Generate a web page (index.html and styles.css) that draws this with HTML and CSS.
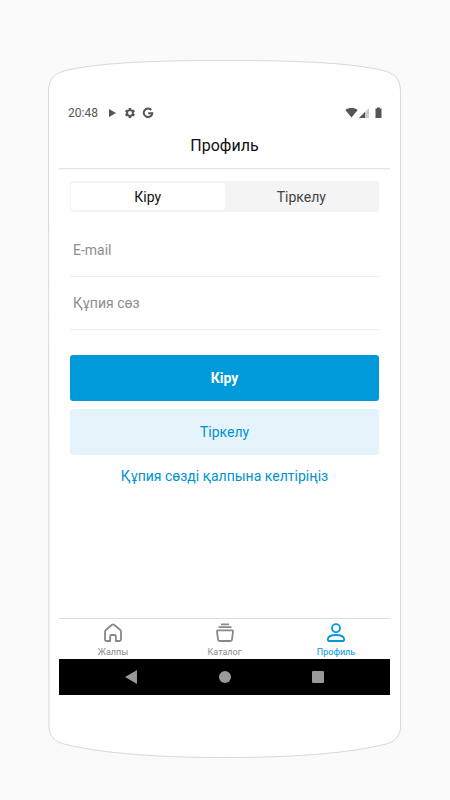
FILE: index.html
```html
<!DOCTYPE html>
<html lang="kk">
<head>
    <meta charset="UTF-8">
    <meta name="viewport" content="width=device-width, initial-scale=1.0">
    <title>Профиль</title>
    <link rel="stylesheet" href="styles.css">
</head>
<body>
    <div class="phone">
        <svg class="phone-frame" viewBox="0 0 353 698" preserveAspectRatio="none" aria-hidden="true">
            <path d="M.5 32C.5 18 7 13 20 10C60 1 130 .5 177 .5S293 1 333 10C346 13 352.500 18 352.500 32V667C352.500 676 346 682 338 684C290 696 220 697.500 177 697.500S64 696 16 684C7 682 1 676 1 667Z" vector-effect="non-scaling-stroke"/>
        </svg>

        <div class="screen">
            <div class="status-bar">
                <span class="time">20:48</span>
                <svg class="status-icon" viewBox="0 0 12 12"><path d="M3 2l7 4-7 4z"/></svg>
                <svg class="status-icon gear" viewBox="0 0 24 24"><path d="M19.400 13a7.500 7.500 0 0 0 0-2l2.100-1.600a.5.5 0 0 0 .1-.7l-2-3.400a.5.5 0 0 0-.6-.2l-2.500 1a7.300 7.300 0 0 0-1.700-1L14.500 2.400a.5.500 0 0 0-.5-.4h-4a.5.5 0 0 0-.5.400l-.4 2.700a7.300 7.300 0 0 0-1.700 1l-2.500-1a.5.5 0 0 0-.6.200l-2 3.400a.5.5 0 0 0 .1.700L4.500 11a7.500 7.500 0 0 0 0 2l-2.100 1.600a.5.5 0 0 0-.1.700l2 3.400a.5.5 0 0 0 .6.200l2.500-1a7.300 7.300 0 0 0 1.700 1l.4 2.700a.5.500 0 0 0 .5.400h4a.5.5 0 0 0 .5-.4l.4-2.700a7.300 7.300 0 0 0 1.700-1l2.500 1a.5.5 0 0 0 .6-.2l2-3.400a.5.5 0 0 0-.1-.7zM12 15.800a3.800 3.800 0 1 1 0-7.600 3.800 3.800 0 0 1 0 7.600z"/></svg>
                <svg class="status-icon" viewBox="0 0 12 12"><path class="ring" d="M9.300 3A4.300 4.300 0 1 0 10.300 6.300H6.200"/></svg>
                <div class="signals">
                    <svg class="wifi" viewBox="0 0 13 12"><path d="M6.500 10.500L.3 3C3.500.4 9.500.4 12.700 3z"/></svg>
                    <svg class="cell" viewBox="0 0 10 12"><path class="weak" d="M10 1v10H0z"/><path d="M6 5v6H0z"/></svg>
                    <svg class="battery" viewBox="0 0 7 12"><path d="M2 .5h3v1h1.500V11H.5V1.500H2z"/></svg>
                </div>
            </div>

            <header class="header">
                <h1>Профиль</h1>
            </header>

            <main class="content">
                <div class="tabs" role="tablist">
                    <button class="tab active" type="button" role="tab" aria-selected="true">Кіру</button>
                    <button class="tab" type="button" role="tab" aria-selected="false">Тіркелу</button>
                </div>

                <form class="login-form">
                    <input class="field" type="email" placeholder="E-mail" aria-label="E-mail">
                    <input class="field" type="password" placeholder="Құпия сөз" aria-label="Құпия сөз">
                    <button class="btn primary" type="submit">Кіру</button>
                    <button class="btn secondary" type="button">Тіркелу</button>
                </form>
                <a class="reset-link" href="#reset">Құпия сөзді қалпына келтіріңіз</a>
            </main>

            <nav class="bottom-nav">
                <a class="nav-item" href="#home">
                    <svg viewBox="0 0 20 20"><path d="M2 8.500C2 7.700 2.300 7.200 3 6.700L9 1.700Q10 1 11 1.700L17 6.700C17.700 7.200 18 7.700 18 8.500V16.500Q18 18 16.500 18H12.800V13Q12.800 12 11.800 12H8.200Q7.200 12 7.200 13V18H3.500Q2 18 2 16.500Z"/></svg>
                    Жалпы
                </a>
                <a class="nav-item" href="#catalog">
                    <svg viewBox="0 0 20 20"><path d="M6 1.300h8M3.500 4.200h13M3 7.300h14Q18.200 7.300 18 8.500L17 16.500Q16.800 18 15.300 18H4.700Q3.200 18 3 16.500L2 8.500Q1.800 7.300 3 7.300Z"/></svg>
                    Каталог
                </a>
                <a class="nav-item active" href="#profile">
                    <svg viewBox="0 0 20 20"><circle cx="10" cy="5.200" r="4"/><path d="M3 18Q1.700 18 1.700 16.500C2 13.500 5 12 10 12S18 13.500 18.300 16.500Q18.300 18 17 18Z"/></svg>
                    Профиль
                </a>
            </nav>

            <div class="system-nav">
                <button type="button" aria-label="Артқа"><svg viewBox="0 0 14 14"><path d="M13 0v14L1 7z"/></svg></button>
                <button type="button" aria-label="Басты экран"><svg viewBox="0 0 14 14"><circle cx="7" cy="7" r="6"/></svg></button>
                <button type="button" aria-label="Соңғылар"><svg viewBox="0 0 14 14"><rect x="1" y="1" width="12" height="12" rx="1"/></svg></button>
            </div>
        </div>
    </div>
</body>
</html>
```

FILE: styles.css
```css
* {
    margin: 0;
    padding: 0;
    box-sizing: border-box;
    font-family: Roboto, "Noto Sans", sans-serif;
}

body {
    background: #fafafa;
    min-height: 100vh;
    padding: 60px 49px 42px 48px;
    display: flex;
}

.phone {
    flex: 1;
    display: grid;
}

/* the curved outline shares one grid cell with the screen */
.phone-frame,
.screen {
    grid-area: 1 / 1;
    min-width: 0;
}

.phone-frame {
    width: 100%;
    height: 100%;
    min-height: 0;
    contain: size;
}

.phone-frame path {
    fill: #fff;
    stroke: #d8d8d8;
    stroke-width: 1px;
}

.screen {
    z-index: 1;
    display: flex;
    flex-direction: column;
    margin: 41px 11px 63px;
}

.status-bar {
    display: flex;
    align-items: center;
    height: 24px;
    padding: 0 8px 0 9px;
    color: #555;
}

.time {
    font-size: 12px;
    margin-right: 8px;
}

.status-bar svg {
    height: 12px;
    fill: #555;
}

.status-icon {
    width: 12px;
    margin-right: 6px;
}

.status-bar .ring {
    fill: none;
    stroke: #555;
    stroke-width: 2;
}

.signals {
    display: flex;
    margin-left: auto;
}

.wifi {
    width: 13px;
    margin-right: 1px;
}

.cell {
    width: 10px;
    margin-right: 6px;
}

.battery {
    width: 7px;
}

.status-bar .weak {
    fill: #ccc;
}

.header {
    height: 44px;
    padding-top: 10px;
    text-align: center;
    border-bottom: 1px solid #e4e4e4;
    box-shadow: 0 1px 1px #f5f5f5;
}

.header h1 {
    font-size: 16px;
    line-height: 22px;
    font-weight: 400;
    color: #111;
}

.content {
    flex: 1;
    padding: 12px 11px;
}

.tabs {
    display: flex;
    padding: 2px 1px;
    background: #f4f4f4;
    border-radius: 3px;
    margin-bottom: 12px;
}

.tab {
    flex: 1;
    height: 27px;
    border: none;
    border-radius: 3px;
    background: transparent;
    font-size: 14px;
    color: #444;
    cursor: pointer;
}

.tab.active {
    background: #fff;
    color: #111;
}

.login-form {
    display: flex;
    flex-direction: column;
}

.field {
    width: 100%;
    height: 53px;
    padding: 0 3px 1px;
    border: none;
    border-bottom: 1px solid #eee;
    background: transparent;
    font-size: 14px;
    color: #111;
}

.field::placeholder {
    color: #8e8e8e;
}

.field:focus {
    outline: none;
    border-color: #0099da;
}

.btn {
    height: 46px;
    border: none;
    border-radius: 3px;
    font-size: 14px;
    cursor: pointer;
}

.primary {
    margin: 25px 0 8px;
    background: #0099da;
    color: #fff;
    font-weight: 700;
}

.secondary {
    background: #e5f4fb;
    color: #0092d0;
}

.reset-link {
    display: block;
    margin-top: 11px;
    font-size: 14px;
    line-height: 20px;
    text-align: center;
    text-decoration: none;
    color: #0092d0;
}

.bottom-nav {
    display: flex;
    justify-content: space-between;
    height: 41px;
    padding: 0 31px;
    border-top: 1px solid #ddd;
}

.nav-item {
    width: 46px;
    display: flex;
    flex-direction: column;
    align-items: center;
    gap: 3px;
    padding-top: 4px;
    font-size: 9px;
    line-height: 12px;
    text-decoration: none;
    color: #888;
}

.nav-item svg {
    width: 20px;
    height: 20px;
    fill: none;
    stroke: currentColor;
    stroke-width: 1.8;
    stroke-linejoin: round;
}

.nav-item.active {
    color: #0099da;
}

.system-nav {
    display: flex;
    justify-content: space-between;
    align-items: center;
    height: 36px;
    padding: 0 65px;
    background: #000;
}

.system-nav button {
    width: 14px;
    height: 14px;
    border: none;
    background: none;
    cursor: pointer;
}

.system-nav svg {
    display: block;
    fill: #999;
}
```
